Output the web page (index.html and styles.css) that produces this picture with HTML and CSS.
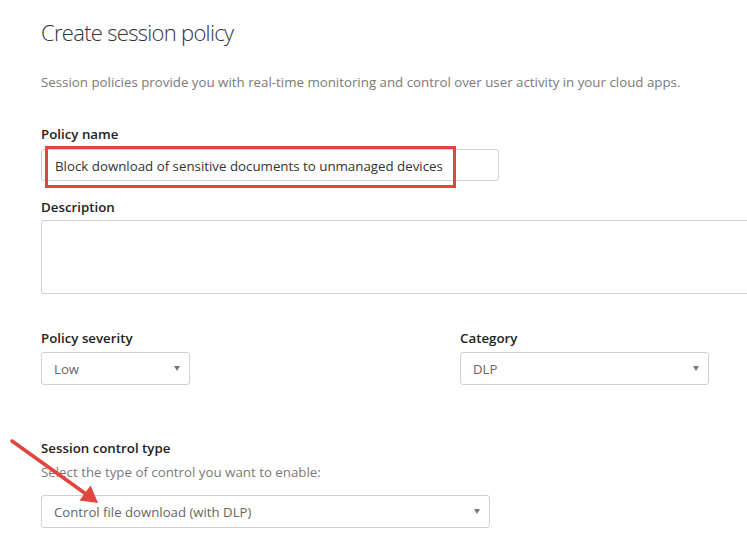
FILE: index.html
```html
<!DOCTYPE html>
<html>
<head>
<meta charset="utf-8">
<link rel="stylesheet" href="styles.css">
</head>
<body>
<div class="page">
  <h1 class="title">Create session policy</h1>
  <p class="intro">Session policies provide you with real-time monitoring and control over user activity in your cloud apps.</p>

  <div class="field field-name">
    <div class="label">Policy name</div>
    <div class="input input-name">Block download of sensitive documents to unmanaged devices</div>
    <div class="highlight"></div>
  </div>

  <div class="field field-desc">
    <div class="label">Description</div>
    <div class="textarea"></div>
  </div>

  <div class="row">
    <div class="col col-sev">
      <div class="label">Policy severity</div>
      <div class="select select-sev"><span>Low</span><i class="caret"></i></div>
    </div>
    <div class="col col-cat">
      <div class="label">Category</div>
      <div class="select select-cat"><span>DLP</span><i class="caret"></i></div>
    </div>
  </div>

  <div class="field field-type">
    <div class="label">Session control type</div>
    <div class="hint">Select the type of control you want to enable:</div>
    <div class="select select-type"><span>Control file download (with DLP)</span><i class="caret"></i></div>
  </div>
</div>
<svg class="arrow" width="120" height="90" viewBox="0 430 120 90">
  <line x1="12" y1="441" x2="86" y2="494" stroke="#e2443e" stroke-width="3.5" stroke-linecap="round"/>
  <polygon points="79.5,500.5 90.5,485.5 98,503" fill="#e2443e"/>
</svg>
</body>
</html>
```
FILE: styles.css
```css
html, body {
  margin: 0;
  padding: 0;
  background: #fff;
  overflow: hidden;
}
body {
  font-family: "Open Sans", "Noto Sans", sans-serif;
  color: #333;
  width: 747px;
  height: 545px;
  position: relative;
}
.page {
  padding: 16px 0 0 41px;
}
.title {
  margin: 0;
  font-size: 22px;
  font-weight: 300;
  line-height: 32px;
  color: #333;
  letter-spacing: -0.7px;
}
.intro {
  margin: 24px 0 0 0;
  font-size: 13.3px;
  line-height: 20px;
  color: #7a7a7a;
}
.label {
  font-size: 13.3px;
  line-height: 20px;
  font-weight: 600;
  color: #222;
}
.field-name {
  margin-top: 32px;
  position: relative;
}
.field-name .label {
  margin-bottom: 5px;
}
.input {
  box-sizing: border-box;
  height: 32px;
  width: 458px;
  border: 1px solid #d0d0d0;
  border-radius: 3px;
  padding: 1px 13px 0;
  font-size: 13.3px;
  line-height: 30px;
  color: #333;
}
.highlight {
  position: absolute;
  left: 4px;
  top: 22px;
  width: 411px;
  height: 42px;
  box-sizing: border-box;
  border: 3px solid #e2443e;
}
.field-desc {
  margin-top: 16px;
}
.field-desc .label {
  margin-bottom: 3px;
}
.textarea {
  box-sizing: border-box;
  width: 740px;
  height: 74px;
  border: 1px solid #d0d0d0;
  border-radius: 3px;
}
.row {
  display: flex;
  margin-top: 34px;
}
.col-sev {
  width: 419px;
}
.row .label {
  margin-bottom: 4px;
}
.select {
  box-sizing: border-box;
  height: 33px;
  border: 1px solid #d0d0d0;
  border-radius: 3px;
  padding: 0 12px;
  display: flex;
  align-items: center;
  justify-content: space-between;
  font-size: 13.2px;
  color: #666;
}
.caret {
  width: 0;
  height: 0;
  border-left: 3.5px solid transparent;
  border-right: 3.5px solid transparent;
  border-top: 5px solid #777;
  margin-right: -3px;
}
.select-sev {
  width: 149px;
}
.select-cat {
  width: 249px;
}
.field-type {
  margin-top: 53px;
}
.hint {
  font-size: 13.3px;
  line-height: 20px;
  color: #7a7a7a;
  margin-top: 4px;
}
.select-type {
  margin-top: 13px;
  width: 449px;
}
.arrow {
  position: absolute;
  left: 0;
  top: 430px;
}
```
